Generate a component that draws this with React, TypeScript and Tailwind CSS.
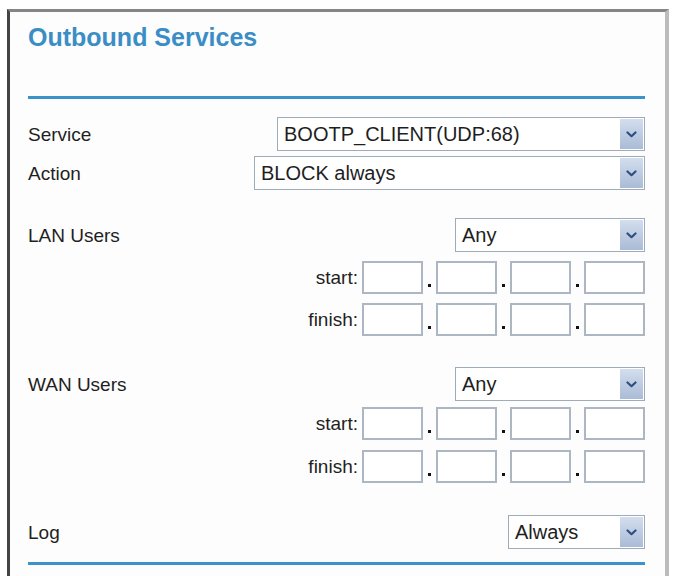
import React from "react";

const Chevron: React.FC = () => (
  <svg width="11" height="7" viewBox="0 0 11 7" fill="none">
    <path d="M1.5 1.5 L5.5 5.2 L9.5 1.5" stroke="#2f4e80" strokeWidth="2.2" strokeLinecap="round" strokeLinejoin="round" />
  </svg>
);

// fake select box with the blue arrow button at the right
const SelectBox: React.FC<{ value: string; className: string }> = ({ value, className }) => (
  <div className={`flex h-[34px] items-center border border-[#9eabb9] bg-white pl-[6px] pr-[1px] ${className}`}>
    <span className="flex-1 text-[20px] leading-none text-[#1e1e1e]">{value}</span>
    <div className="flex h-[30px] w-[23px] items-center justify-center bg-gradient-to-b from-[#d3deee] to-[#a9bbd6]">
      <Chevron />
    </div>
  </div>
);

const Label: React.FC<{ children: React.ReactNode }> = ({ children }) => (
  <span className="text-[19px] leading-none text-[#1f1f1f]">{children}</span>
);

const IpRow: React.FC<{ label: string; className: string }> = ({ label, className }) => (
  <div className={`flex h-[33px] items-center justify-end ${className}`}>
    <span className="mr-[4px] text-[19px] leading-none text-[#1f1f1f]">{label}</span>
    {[0, 1, 2, 3].map((i) => (
      <React.Fragment key={i}>
        {i > 0 && (
          <div className="flex h-[33px] w-[13px] items-end justify-center pb-[7px]">
            <div className="h-[3px] w-[3px] bg-[#111]" />
          </div>
        )}
        <div className="h-[33px] w-[61px] border-2 border-[#acb7c3] bg-white" />
      </React.Fragment>
    ))}
  </div>
);

export default function App() {
  return (
    <div className="h-[576px] w-[676px] overflow-hidden bg-white pl-[7px] pt-[9px] font-['Liberation_Sans',Arial,sans-serif]">
      <div className="h-[600px] w-[662px] border-l-[3px] border-r-[4px] border-t-[3px] border-l-[#444] border-r-[#bcbcbc] border-t-[#858585] bg-[#fdfdfd] pl-[18px] pr-[20px]">
        <h1 className="mt-[13px] text-[25px] font-bold leading-[25px] text-[#3a8ec5]">Outbound Services</h1>
        <div className="mt-[46px] h-[3px] bg-[#3b94c9]" />

        <div className="mt-[18px] flex items-center justify-between">
          <Label>Service</Label>
          <SelectBox value="BOOTP_CLIENT(UDP:68)" className="w-[368px]" />
        </div>
        <div className="mt-[5px] flex items-center justify-between">
          <Label>Action</Label>
          <SelectBox value="BLOCK always" className="w-[391px]" />
        </div>

        <div className="mt-[28px] flex items-center justify-between">
          <Label>LAN Users</Label>
          <SelectBox value="Any" className="w-[190px]" />
        </div>
        <IpRow label="start:" className="mt-[9px]" />
        <IpRow label="finish:" className="mt-[9px]" />

        <div className="mt-[31px] flex items-center justify-between">
          <Label>WAN Users</Label>
          <SelectBox value="Any" className="w-[190px]" />
        </div>
        <IpRow label="start:" className="mt-[6px]" />
        <IpRow label="finish:" className="mt-[10px]" />

        <div className="mt-[32px] flex items-center justify-between">
          <Label>Log</Label>
          <SelectBox value="Always" className="w-[137px]" />
        </div>
        <div className="mt-[13px] h-[3px] bg-[#3b94c9]" />
      </div>
    </div>
  );
}
